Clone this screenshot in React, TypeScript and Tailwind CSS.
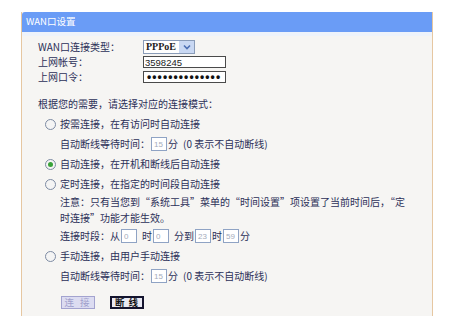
import React from 'react'

const cjk = "font-['Noto_Sans_CJK_SC','Noto_Sans',sans-serif]"

function Radio({ checked }: { checked?: boolean }) {
  return (
    <span className="flex h-[11px] w-[11px] shrink-0 items-center justify-center rounded-full border border-[#7d8ba3] bg-[#f4f4f4]">
      {checked && <span className="h-[5px] w-[5px] rounded-full bg-[#39a23a]" />}
    </span>
  )
}

function SmallInput({ value }: { value: string }) {
  return (
    <input
      readOnly
      value={value}
      className="mx-[1px] h-[14px] w-[16px] border border-[#8fa3c4] bg-white pl-[2px] font-['Liberation_Sans',sans-serif] text-[8px] text-[#a4acbc] outline-none"
    />
  )
}

function Row({ children }: { children: React.ReactNode }) {
  return <div className="flex h-[20px] items-center whitespace-nowrap pl-[22px]">{children}</div>
}

function RadioRow({ checked, label }: { checked?: boolean; label: string }) {
  return (
    <div className="flex h-[20px] items-center gap-[4px] whitespace-nowrap pl-[7px]">
      <Radio checked={checked} />
      <span>{label}</span>
    </div>
  )
}

export default function App() {
  return (
    <div lang="zh-CN" className={`h-[316px] w-[450px] overflow-hidden bg-white text-[10px] leading-none text-[#2c3058] ${cjk}`}>
      <div className="ml-[21px] mt-[12px] h-[330px] w-[412px] border-x border-[#e6c7a1] bg-[#f6f5f3]">
        <div className="flex h-[20px] items-center rounded-tl-[3px] bg-[#6a9cf6] pl-[4px] text-[9.5px] text-white">
          WAN口设置
        </div>
        <div className="h-[4px] bg-[#eef3fb]" />

        <div className="pl-[16px] pt-[4px]">
          <div className="flex flex-col gap-[1px]">
            <div className="flex h-[14px] items-center">
              <span className="w-[105px]">WAN口连接类型：</span>
              <div className="flex h-[14px] w-[52px] items-center border border-[#8a9cb8] bg-white">
                <span className="flex-1 pl-[2px] font-['Liberation_Serif',serif] text-[10px] font-bold text-[#222]">PPPoE</span>
                <span className="flex h-full w-[15px] items-center justify-center bg-[#c9d8f3]">
                  <svg width="8" height="6" viewBox="0 0 8 6">
                    <path d="M1 1.5 L4 4.5 L7 1.5" fill="none" stroke="#4d6fb3" strokeWidth="1.6" />
                  </svg>
                </span>
              </div>
            </div>
            <div className="flex h-[14px] items-center">
              <span className="w-[105px]">上网帐号：</span>
              <input
                readOnly
                value="3598245"
                className="h-[12px] w-[83px] border border-[#4a4a4a] bg-white pl-[1px] font-['Liberation_Sans',sans-serif] text-[9.5px] text-[#222] outline-none"
              />
            </div>
            <div className="flex h-[14px] items-center">
              <span className="w-[105px]">上网口令：</span>
              <div className="flex h-[12px] w-[83px] items-center overflow-hidden border border-[#4a4a4a] bg-white pl-[3px] font-['Liberation_Sans',sans-serif] text-[12px] font-bold tracking-[1.1px] text-[#111]">
                ••••••••••••••
              </div>
            </div>
          </div>

          <div className="mt-[10px]">
            <div className="flex h-[20px] items-center whitespace-nowrap">根据您的需要，请选择对应的连接模式：</div>
            <RadioRow label="按需连接，在有访问时自动连接" />
            <Row>
              自动断线等待时间：<SmallInput value="15" />分
              <span className="ml-[5px]">(0 表示不自动断线)</span>
            </Row>
            <RadioRow checked label="自动连接，在开机和断线后自动连接" />
            <RadioRow label="定时连接，在指定的时间段自动连接" />
            <div className="whitespace-nowrap pl-[22px] leading-[16px]">
              注意：只有当您到“系统工具”菜单的“时间设置”项设置了当前时间后，“定
              <br />
              时连接”功能才能生效。
            </div>
            <Row>
              连接时段：从<SmallInput value="0" />
              <span className="ml-[4px]">时</span>
              <SmallInput value="0" />
              <span className="ml-[4px]">分到</span>
              <SmallInput value="23" />时<SmallInput value="59" />分
            </Row>
            <RadioRow label="手动连接，由用户手动连接" />
            <Row>
              自动断线等待时间：<SmallInput value="15" />分
              <span className="ml-[5px]">(0 表示不自动断线)</span>
            </Row>
            <div className="mt-[10px] flex gap-[15px] pl-[23px]">
              <button className="flex h-[13px] w-[34px] items-center justify-center whitespace-nowrap border border-[#a3a3cf] bg-[#dcdcf1] text-[9.5px] tracking-[2px] text-[#a0a0cc]">
                连 接
              </button>
              <button className="flex h-[13px] w-[34px] items-center justify-center whitespace-nowrap border-2 border-[#14142e] bg-[#e9e9f2] text-[9.5px] font-bold tracking-[1px] text-[#111]">
                断 线
              </button>
            </div>
          </div>
        </div>
      </div>
    </div>
  )
}
